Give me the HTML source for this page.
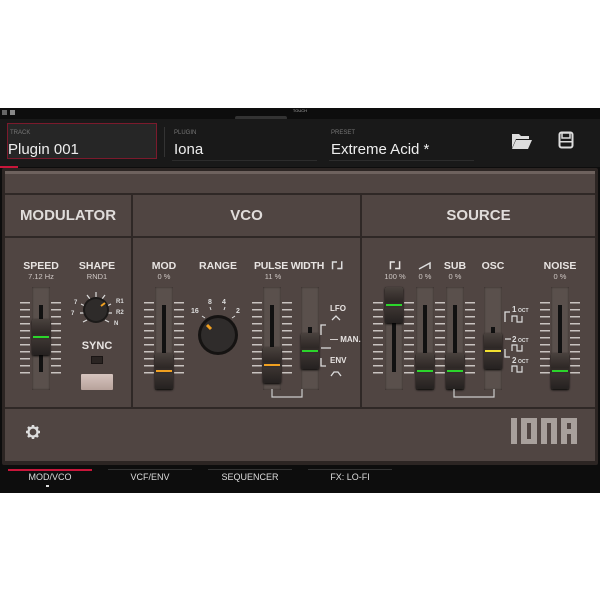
<!DOCTYPE html><html><head><style>
*{margin:0;padding:0;box-sizing:border-box}
body{width:600px;height:600px;background:#fff;position:relative;overflow:hidden;font-family:"Liberation Sans",sans-serif}
.a{position:absolute;white-space:nowrap}
.hd{color:#e0dcda;font-weight:bold;font-size:15px;text-align:center}
.lb{color:#e8e4e2;font-weight:bold;font-size:10.5px;text-align:center}
.vl{color:#cfc8c5;font-size:7.5px;text-align:center}
.slot{position:absolute;width:18px;height:103px;top:287px;background:#5a504c;box-shadow:inset 0 0 2px #2d2624}
.trk{position:absolute;left:7px;top:18px;width:4px;height:67px;background:#111}
.cap{position:absolute;left:0;width:18px;height:36px;background:linear-gradient(#4a423e,#2e2826 40%,#3a3330 60%,#252120);border-radius:2px;box-shadow:0 1px 2px #000}
.cap i{position:absolute;left:1px;right:1px;top:17px;height:2px}
.sc{position:absolute;top:302px;width:10px;height:72px;background:repeating-linear-gradient(#c9c3c0 0 1.5px,transparent 1.5px 7px)}
.dv{position:absolute;width:2px;background:#2f2826}
.tb{position:absolute;top:472px;width:84px;color:#ddd;font-size:9px;text-align:center}
</style></head><body>
<div class="a" style="left:0;top:108px;width:600px;height:385px;background:#0d0d0d"></div>
<div class="a" style="left:2px;top:110px;width:5px;height:5px;background:#666"></div>
<div class="a" style="left:10px;top:110px;width:5px;height:5px;background:#888"></div>
<div class="a" style="left:270px;top:108px;width:60px;height:8px;color:#aaa;font-size:4px;text-align:center">TOUCH</div>
<div class="a" style="left:235px;top:116px;width:52px;height:4px;background:#333;border-radius:2px"></div>
<div class="a" style="left:0;top:119px;width:600px;height:48px;background:#191919"></div>
<div class="a" style="left:7px;top:123px;width:150px;height:36px;background:#262626;border:1px solid #7b1a2c"></div>
<div class="a" style="left:10px;top:130px;color:#777;font-size:6px">TRACK</div>
<div class="a" style="left:8px;top:141px;color:#eee;font-size:15px">Plugin 001</div>
<div class="a" style="left:164px;top:127px;width:1px;height:30px;background:#333"></div>
<div class="a" style="left:174px;top:130px;color:#777;font-size:6px">PLUGIN</div>
<div class="a" style="left:174px;top:141px;color:#eee;font-size:15px">Iona</div>
<div class="a" style="left:172px;top:160px;width:145px;height:1px;background:#2c2c2c"></div>
<div class="a" style="left:331px;top:130px;color:#777;font-size:6px">PRESET</div>
<div class="a" style="left:331px;top:141px;color:#eee;font-size:15px">Extreme Acid *</div>
<div class="a" style="left:329px;top:160px;width:145px;height:1px;background:#2c2c2c"></div>
<svg class="a" style="left:510px;top:131px" width="24" height="20"><path d="M2 3h7l2 2h8v3H6L2 17z" fill="#ddd"/><path d="M6 9h16l-4 9H2z" fill="#ddd"/></svg>
<svg class="a" style="left:558px;top:131px" width="16" height="18"><rect x="1.5" y="1.5" width="13" height="15" rx="2" fill="none" stroke="#ddd" stroke-width="2"/><rect x="4" y="2" width="8" height="5" fill="none" stroke="#ddd" stroke-width="1.5"/><rect x="2" y="10" width="12" height="1.5" fill="#ddd"/></svg>
<div class="a" style="left:0;top:166px;width:18px;height:2px;background:#c8163a"></div>
<!-- panel -->
<div class="a" style="left:2px;top:168px;width:596px;height:297px;background:#2c2523;border-radius:2px"></div>
<div class="a" style="left:5px;top:171px;width:590px;height:290px;background:#504542"></div>
<div class="a" style="left:5px;top:171px;width:590px;height:3px;background:#6e625e"></div>
<div class="a" style="left:5px;top:193px;width:590px;height:2px;background:#2f2826"></div>
<div class="a" style="left:5px;top:236px;width:590px;height:2px;background:#2f2826"></div>
<div class="a" style="left:5px;top:407px;width:590px;height:2px;background:#2f2826"></div>
<div class="dv" style="left:131px;top:195px;height:213px"></div>
<div class="dv" style="left:360px;top:195px;height:213px"></div>
<div class="a hd" style="left:5px;top:207px;width:126px">MODULATOR</div>
<div class="a hd" style="left:133px;top:207px;width:227px">VCO</div>
<div class="a hd" style="left:362px;top:207px;width:233px">SOURCE</div>
<!-- labels -->
<div class="a lb" style="left:16px;top:260px;width:50px">SPEED</div><div class="a vl" style="left:16px;top:272px;width:50px">7.12 Hz</div>
<div class="a lb" style="left:72px;top:260px;width:50px">SHAPE</div><div class="a vl" style="left:72px;top:272px;width:50px">RND1</div>
<div class="a lb" style="left:139px;top:260px;width:50px">MOD</div><div class="a vl" style="left:139px;top:272px;width:50px">0 %</div>
<div class="a lb" style="left:193px;top:260px;width:50px">RANGE</div>
<div class="a lb" style="left:254px;top:260px;width:74px;letter-spacing:-0.2px;text-align:left">PULSE WIDTH</div><div class="a vl" style="left:248px;top:272px;width:50px">11 %</div>
<div class="a lb" style="left:331px;top:260px;color:#ddd">ᒥᒧ</div>
<div class="a lb" style="left:385px;top:260px;width:20px">ᒥᒧ</div><div class="a vl" style="left:380px;top:272px;width:30px">100 %</div>
<svg class="a" style="left:418px;top:261px" width="14" height="9"><path d="M1 8L12 2V8" fill="none" stroke="#ddd" stroke-width="1.5"/></svg><div class="a vl" style="left:410px;top:272px;width:30px">0 %</div>
<div class="a lb" style="left:440px;top:260px;width:30px">SUB</div><div class="a vl" style="left:440px;top:272px;width:30px">0 %</div>
<div class="a lb" style="left:478px;top:260px;width:30px">OSC</div>
<div class="a lb" style="left:540px;top:260px;width:40px">NOISE</div><div class="a vl" style="left:545px;top:272px;width:30px">0 %</div>
<!-- scales -->
<div class="sc" style="left:20px"></div><div class="sc" style="left:51px"></div>
<div class="sc" style="left:144px"></div><div class="sc" style="left:174px"></div>
<div class="sc" style="left:252px"></div><div class="sc" style="left:282px"></div>
<div class="sc" style="left:373px"></div><div class="sc" style="left:404px"></div><div class="sc" style="left:435px"></div><div class="sc" style="left:465px"></div>
<div class="sc" style="left:540px"></div><div class="sc" style="left:570px"></div>
<!-- faders -->
<div class="slot" style="left:32px"><div class="trk"></div><div class="cap" style="top:32px"><i style="background:#2bd52b"></i></div></div>
<div class="slot" style="left:155px"><div class="trk"></div><div class="cap" style="top:66px"><i style="background:#f0a020"></i></div></div>
<div class="slot" style="left:263px"><div class="trk"></div><div class="cap" style="top:60px"><i style="background:#f0a020"></i></div></div>
<div class="slot" style="left:301px"><div class="trk" style="top:40px;height:10px"></div><div class="cap" style="top:46px"><i style="background:#2bd52b"></i></div></div>
<div class="slot" style="left:385px"><div class="trk"></div><div class="cap" style="top:0"><i style="background:#2bd52b"></i></div></div>
<div class="slot" style="left:416px"><div class="trk"></div><div class="cap" style="top:66px"><i style="background:#2bd52b"></i></div></div>
<div class="slot" style="left:446px"><div class="trk"></div><div class="cap" style="top:66px"><i style="background:#2bd52b"></i></div></div>
<div class="slot" style="left:484px"><div class="trk" style="top:40px;height:10px"></div><div class="cap" style="top:46px"><i style="background:#f2e030"></i></div></div>
<div class="slot" style="left:551px"><div class="trk"></div><div class="cap" style="top:66px"><i style="background:#2bd52b"></i></div></div>
<!-- knobs -->
<svg class="a" style="left:66px;top:282px" width="62" height="58">
<g stroke="#ddd" stroke-width="1.2"><path d="M30 10v5M21 13l3 4M39 13l-3 4M15 22l4 2M45 22l-4 2M14 31h5M46 31h-5M17 40l4-2M43 40l-4-2"/></g>
<g fill="#ddd" font-size="6" font-weight="bold" font-family="Liberation Sans"><text x="50" y="21">R1</text><text x="50" y="32">R2</text><text x="48" y="43">N</text><text x="5" y="33">7</text><text x="8" y="22">7</text></g>
<circle cx="30" cy="28" r="13" fill="#1c1a19"/><circle cx="30" cy="28" r="11" fill="#2e2b2a"/><path d="M35 24l4-3" stroke="#f0a020" stroke-width="2"/></svg>
<svg class="a" style="left:190px;top:296px" width="60" height="62">
<g fill="#ddd" font-size="7" font-weight="bold" font-family="Liberation Sans"><text x="1" y="17">16</text><text x="18" y="8">8</text><text x="32" y="8">4</text><text x="46" y="17">2</text></g>
<path d="M20 11l1 3M35 11l-1 3M12 20l3 2M45 20l-3 2" stroke="#ddd"/>
<circle cx="28" cy="39" r="20" fill="#151312"/><circle cx="28" cy="39" r="17" fill="#2f2c2b"/><path d="M17 29l4 4" stroke="#f0a020" stroke-width="3"/></svg>
<div class="a lb" style="left:72px;top:340px;width:50px;font-size:11px">SYNC</div>
<div class="a" style="left:91px;top:356px;width:12px;height:8px;background:#2a2422;border:1px solid #1a1514"></div>
<div class="a" style="left:81px;top:374px;width:32px;height:16px;background:linear-gradient(#d6c4be,#b7a29b);border-radius:1px"></div>
<!-- switch labels -->
<div class="a lb" style="left:330px;top:304px;font-size:8px">LFO</div>
<div class="a lb" style="left:330px;top:335px;font-size:8px">— MAN.</div>
<div class="a lb" style="left:330px;top:356px;font-size:8px">ENV</div>
<svg class="a" style="left:318px;top:310px" width="30" height="70"><path d="M3 25V15h5M3 38h10M3 48v8h5M14 10l4-4 4 4M13 66l3-4h4l3 4" fill="none" stroke="#ddd" stroke-width="1.3"/></svg>
<svg class="a" style="left:502px;top:300px" width="40" height="80"><path d="M3 22V12h5M3 39h6M3 49v8h5" fill="none" stroke="#ddd" stroke-width="1.3"/>
<g fill="#ddd" font-family="Liberation Sans" font-weight="bold"><text x="10" y="12" font-size="8">1</text><text x="16" y="12" font-size="5">OCT</text><text x="10" y="42" font-size="8">2</text><text x="16" y="42" font-size="5">OCT</text><text x="10" y="63" font-size="8">2</text><text x="16" y="63" font-size="5">OCT</text></g>
<path d="M10 22v-6h5v6h5v-6M10 51v-6h5v6h5v-6M10 72v-6h5v6h5v-6" fill="none" stroke="#ddd" stroke-width="1.2"/></svg>
<svg class="a" style="left:270px;top:388px" width="300" height="12"><path d="M2 1v8h30V1M184 1v8h40V1" fill="none" stroke="#ccc" stroke-width="1.2"/></svg>
<!-- bottom -->
<svg class="a" style="left:25px;top:424px" width="16" height="16"><circle cx="8" cy="8" r="4.5" fill="none" stroke="#ddd" stroke-width="2.2"/><g stroke="#ddd" stroke-width="2.5"><path d="M8 1v3M8 12v3M1 8h3M12 8h3M3 3l2 2M11 11l2 2M3 13l2-2M11 5l2-2"/></g></svg>
<svg class="a" style="left:511px;top:418px" width="72" height="26"><g fill="#a8a09c">
<rect x="0" y="0" width="6" height="26"/>
<path d="M10 0h16v26H10zM16 5v16h4V5z" fill-rule="evenodd"/>
<path d="M30 0h16v26h-6V5h-4v21h-6z"/>
<path d="M50 0h16v26h-6v-10h-4v10h-6zM56 5v6h4V5z" fill-rule="evenodd"/></g></svg>
<!-- tabs -->
<div class="a" style="left:8px;top:469px;width:84px;height:2px;background:#c8163a"></div>
<div class="a" style="left:108px;top:469px;width:84px;height:1px;background:#333"></div>
<div class="a" style="left:208px;top:469px;width:84px;height:1px;background:#333"></div>
<div class="a" style="left:308px;top:469px;width:84px;height:1px;background:#333"></div>
<div class="tb" style="left:8px">MOD/VCO</div>
<div class="tb" style="left:108px">VCF/ENV</div>
<div class="tb" style="left:208px">SEQUENCER</div>
<div class="tb" style="left:308px">FX: LO-FI</div>
<div class="a" style="left:46px;top:485px;width:3px;height:2px;background:#ddd"></div>
</body></html>
